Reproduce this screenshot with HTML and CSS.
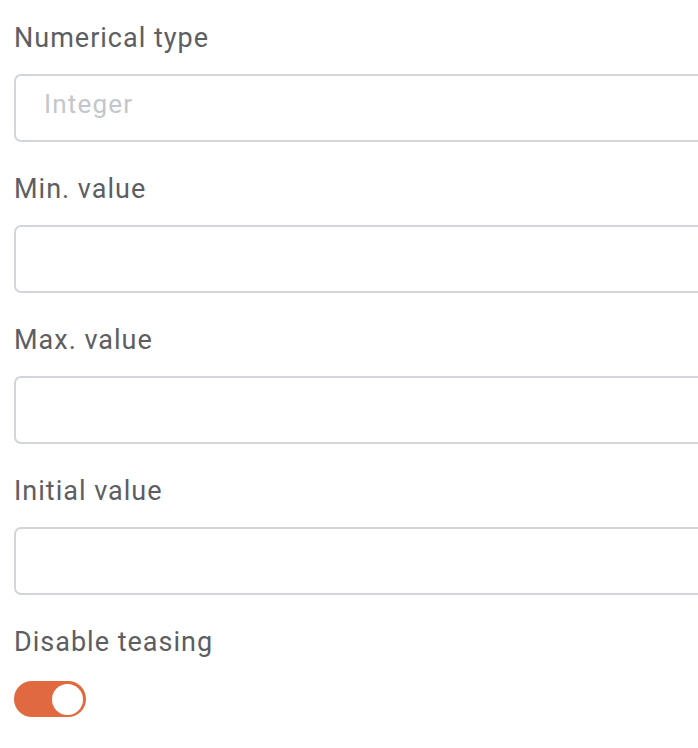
FILE: index.html
```html
<!DOCTYPE html>
<html lang="en">
<head>
    <meta charset="UTF-8">
    <meta name="viewport" content="width=device-width, initial-scale=1.0">
    <title>Number field settings</title>
    <link rel="stylesheet" href="styles.css">
</head>
<body>

    <!-- 数值设置表单 -->
    <form class="settings">
        <div class="field">
            <label for="num-type">Numerical type</label>
            <input type="text" id="num-type" placeholder="Integer">
        </div>

        <div class="field">
            <label for="min-value">Min. value</label>
            <input type="text" id="min-value">
        </div>

        <div class="field">
            <label for="max-value">Max. value</label>
            <input type="text" id="max-value">
        </div>

        <div class="field">
            <label for="initial-value">Initial value</label>
            <input type="text" id="initial-value">
        </div>

        <div class="field">
            <label for="teasing">Disable teasing</label>
            <label class="switch">
                <input type="checkbox" id="teasing" checked>
                <span class="slider"></span>
            </label>
        </div>
    </form>

</body>
</html>
```

FILE: styles.css
```css
body {
    margin: 0;
    padding: 0;
    font-family: Roboto, "Liberation Sans", Arial, sans-serif;
    background-color: #fff;
    color: #5c5e63;
    overflow: hidden;
}

/* 表单容器 */
.settings {
    width: 760px;
    padding: 22px 0 0 14px;
}

.field {
    display: flex;
    flex-direction: column;
    margin-bottom: 31px;
}

.field > label {
    font-size: 27px;
    line-height: 32px;
    letter-spacing: 1px;
    margin-bottom: 20px;
}

/* 输入框 */
.field input[type="text"] {
    box-sizing: border-box;
    height: 68px;
    width: 100%;
    border: 2px solid #d2d5d9;
    border-radius: 7px;
    padding: 0 28px 8px;
    font-family: inherit;
    font-size: 26px;
    letter-spacing: 1.2px;
    color: #5c5e63;
    outline: none;
}

.field input::placeholder {
    color: #c3c6cc;
}

/* 开关 */
.switch {
    position: relative;
    display: inline-block;
    width: 72px;
    height: 36px;
    margin-top: 3px;
}

.switch input {
    opacity: 0;
    width: 0;
    height: 0;
}

.slider {
    position: absolute;
    inset: 0;
    background-color: #d2d5d9;
    border-radius: 18px;
    cursor: pointer;
}

.slider::before {
    content: "";
    position: absolute;
    width: 31px;
    height: 31px;
    left: 3px;
    top: 2.5px;
    background-color: #fff;
    border-radius: 50%;
}

.switch input:checked + .slider {
    background-color: #e0693f;
}

.switch input:checked + .slider::before {
    left: 38px;
}
```
